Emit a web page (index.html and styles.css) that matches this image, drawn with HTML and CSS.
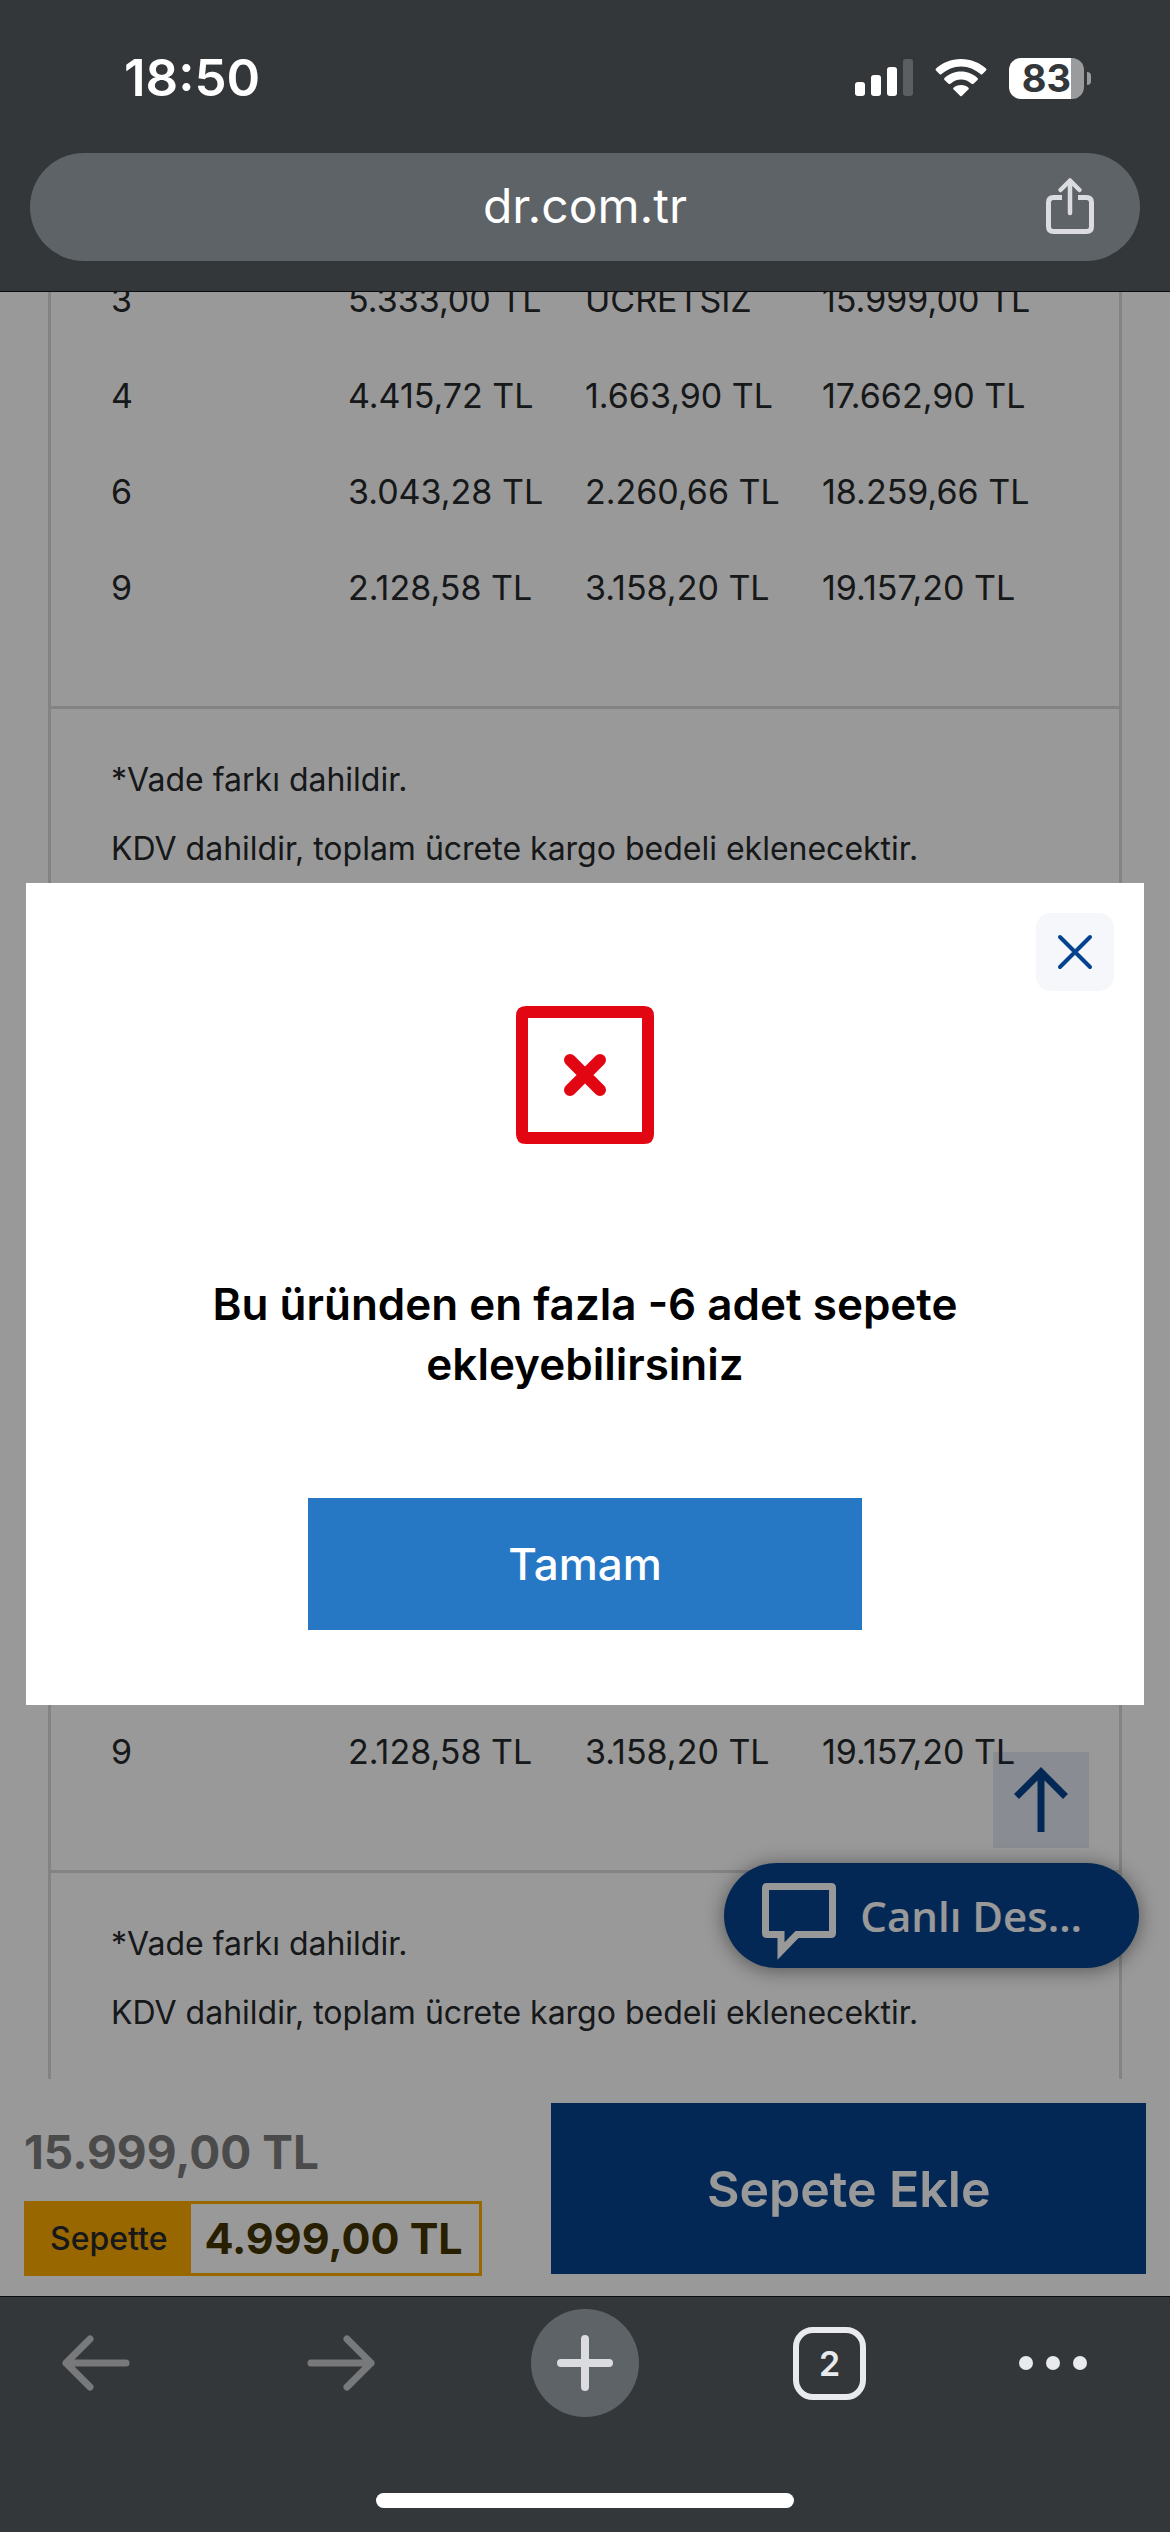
FILE: index.html
```html
<!DOCTYPE html>
<html lang="tr">
<head>
<meta charset="utf-8">
<meta name="viewport" content="width=device-width, initial-scale=1">
<title>dr.com.tr</title>
<link rel="stylesheet" href="styles.css">
</head>
<body>
<header class="browser-top">
  <div class="status">
    <span class="clock">18:50</span>
    <div class="status-icons">
      <svg class="signal" width="58" height="38" viewBox="0 0 58 38" aria-hidden="true">
        <g fill="#fff"><rect x="0" y="23" width="10" height="14" rx="3"/><rect x="16" y="16" width="10" height="21" rx="3"/><rect x="32" y="8" width="10" height="29" rx="3"/></g>
        <rect x="48" y="0" width="10" height="37" rx="3" fill="#5c5f61"/>
      </svg>
      <svg class="wifi" width="52" height="38" viewBox="0 0 52 38" fill="#fff" aria-hidden="true">
        <path d="M26 0C16 0 7 4 1 9.500Q0 10.500 1 11.500L4.500 15Q5.500 16 6.500 15C12 10.500 18.500 7.500 26 7.500S40 10.500 45.500 15Q46.500 16 47.500 15L51 11.500Q52 10.500 51 9.500C45 4 36 0 26 0Z"/>
        <path d="M26 12.500C19.500 12.500 14 15 9.500 19Q8.500 20 9.500 21L13.500 24.700Q14.500 25.500 15.500 24.700C18.500 22 22 20.500 26 20.500S33.500 22 36.500 24.700Q37.500 25.500 38.500 24.700L42.500 21Q43.500 20 42.500 19C38 15 32.500 12.500 26 12.500Z"/>
        <path d="M26 26C22.800 26 20.500 27 18.500 28.700Q17.700 29.500 18.500 30.300L25 36.800Q26 37.800 27 36.800L33.500 30.300Q34.300 29.500 33.500 28.700C31.500 27 29.200 26 26 26Z"/>
      </svg>
      <div class="battery">83</div>
    </div>
  </div>
  <div class="address">
    <span class="url">dr.com.tr</span>
    <button class="share" type="button" aria-label="Paylaş">
      <svg width="50" height="60" viewBox="0 0 50 60" fill="none" stroke="#dadce0" stroke-width="5" aria-hidden="true">
        <path d="M17 20.500H8.500Q3.500 20.500 3.500 25.500V49.500Q3.500 54.500 8.500 54.500H41.500Q46.500 54.500 46.500 49.500V25.500Q46.500 20.500 41.500 20.500H33"/>
        <path d="M25 36V4.500M15.500 13L25 3.500L34.500 13" stroke-width="4.500" stroke-linecap="round" stroke-linejoin="round"/>
      </svg>
    </button>
  </div>
</header>

<main class="shop">
  <div class="page">
    <section class="card">
      <table class="plans">
        <tbody>
          <tr><td>3</td><td>5.333,00 TL</td><td>ÜCRETSİZ</td><td>15.999,00 TL</td></tr>
          <tr><td>4</td><td>4.415,72 TL</td><td>1.663,90 TL</td><td>17.662,90 TL</td></tr>
          <tr><td>6</td><td>3.043,28 TL</td><td>2.260,66 TL</td><td>18.259,66 TL</td></tr>
          <tr><td>9</td><td>2.128,58 TL</td><td>3.158,20 TL</td><td>19.157,20 TL</td></tr>
        </tbody>
      </table>
      <div class="notes">
        <p>*Vade farkı dahildir.</p>
        <p>KDV dahildir, toplam ücrete kargo bedeli eklenecektir.</p>
      </div>
    </section>
    <section class="card card-last">
      <table class="plans">
        <tbody>
          <tr><td>9</td><td>2.128,58 TL</td><td>3.158,20 TL</td><td>19.157,20 TL</td></tr>
        </tbody>
      </table>
      <div class="notes">
        <p>*Vade farkı dahildir.</p>
        <p>KDV dahildir, toplam ücrete kargo bedeli eklenecektir.</p>
      </div>
    </section>
  </div>

  <div class="cart-bar">
    <div class="prices">
      <div class="old-price">15.999,00 TL</div>
      <div class="deal"><span class="deal-label">Sepette</span><strong class="deal-price">4.999,00 TL</strong></div>
    </div>
    <button class="add" type="button">Sepete Ekle</button>
  </div>

  <button class="to-top" type="button" aria-label="Yukarı çık">
    <svg width="56" height="66" viewBox="0 0 56 66" fill="none" stroke="#07448f" stroke-width="7" aria-hidden="true"><path d="M28 65V5M3.500 29.500L28 5L52.500 29.500"/></svg>
  </button>
  <button class="chat" type="button">
    <svg width="76" height="92" viewBox="0 -12 76 92" fill="none" stroke="#fff" stroke-width="7" aria-hidden="true"><path d="M6 4.500H70Q71.500 4.500 71.500 6V51Q71.500 52.500 70 52.500H36L20 69V52.500H6Q4.500 52.500 4.500 51V6Q4.500 4.500 6 4.500Z"/></svg>
    <span>Canlı Des…</span>
  </button>

  <div class="overlay">
    <section class="modal" role="dialog" aria-modal="true" aria-labelledby="message">
      <button class="close" type="button" aria-label="Kapat">
        <svg width="36" height="36" viewBox="0 0 36 36" fill="none" stroke="#06438f" stroke-width="4" stroke-linecap="round" aria-hidden="true"><path d="M3 3L33 33M33 3L3 33"/></svg>
      </button>
      <svg class="error" width="138" height="138" viewBox="0 0 138 138" aria-hidden="true">
        <path fill="#e20613" fill-rule="evenodd" d="M10 0H128Q138 0 138 10V128Q138 138 128 138H10Q0 138 0 128V10Q0 0 10 0ZM12 12V126H126V12Z"/>
        <path d="M54 54L84 84M84 54L54 84" stroke="#e20613" stroke-width="12" stroke-linecap="round"/>
      </svg>
      <p class="message" id="message">Bu üründen en fazla -6 adet sepete ekleyebilirsiniz</p>
      <button class="ok" type="button">Tamam</button>
    </section>
  </div>
</main>

<nav class="browser-bottom">
  <div class="tools">
    <button type="button" aria-label="Geri"><svg width="68" height="56" viewBox="0 0 68 56" fill="none" stroke="#77797b" stroke-width="7" stroke-linecap="round" stroke-linejoin="round" aria-hidden="true"><path d="M64 28H4M28 4L4 28L28 52"/></svg></button>
    <button type="button" aria-label="İleri"><svg width="68" height="56" viewBox="0 0 68 56" fill="none" stroke="#77797b" stroke-width="7" stroke-linecap="round" stroke-linejoin="round" aria-hidden="true"><path d="M4 28H64M40 4L64 28L40 52"/></svg></button>
    <button class="new-tab" type="button" aria-label="Yeni sekme"><svg width="56" height="56" viewBox="0 0 56 56" stroke="#dadce0" stroke-width="8" stroke-linecap="round" aria-hidden="true"><path d="M28 4V52M4 28H52"/></svg></button>
    <button class="tabs" type="button" aria-label="2 sekme">2</button>
    <button class="more" type="button" aria-label="Menü"><svg width="68" height="14" viewBox="0 0 68 14" fill="#e8eaed" aria-hidden="true"><circle cx="7" cy="7" r="7"/><circle cx="34" cy="7" r="7"/><circle cx="61" cy="7" r="7"/></svg></button>
  </div>
  <div class="home-bar"></div>
</nav>
</body>
</html>
```
FILE: styles.css
```css
* { box-sizing: border-box; }

body {
  margin: 0;
  min-height: 100vh;
  display: flex;
  flex-direction: column;
  background: #33373a;
  font-family: Inter, "Liberation Sans", sans-serif;
  color: #26292b;
}

button {
  margin: 0;
  padding: 0;
  border: 0;
  background: none;
  font-family: inherit;
  color: inherit;
}

svg { display: block; flex: none; }
p { margin: 0; }

/* Browser top */
.browser-top {
  padding: 47px 30px 30px;
  border-bottom: 1px solid #0c0d0e;
}

.status {
  display: flex;
  justify-content: space-between;
  align-items: center;
  height: 62px;
  margin-bottom: 44px;
  padding: 0 56px 0 94px;
  color: #fff;
}

.clock { font-size: 51px; line-height: 62px; font-weight: 600; }

.status-icons { display: flex; align-items: center; gap: 22px; }

.battery {
  position: relative;
  width: 75px;
  height: 41px;
  border-radius: 12px;
  background: linear-gradient(to right, #fff 62px, #9a9b9d 62px);
  color: #33373a;
  font-size: 38px;
  line-height: 41px;
  font-weight: 700;
  text-align: center;
}

.battery::after {
  content: "";
  position: absolute;
  left: 78px;
  top: 14px;
  width: 4px;
  height: 13px;
  border-radius: 0 6px 6px 0;
  background: #9a9b9d;
}

.address {
  display: grid;
  grid-template-columns: 1fr auto 1fr;
  align-items: center;
  height: 108px;
  padding: 0 45px;
  border-radius: 54px;
  background: #5e6367;
}

.url { grid-column: 2; padding-bottom: 2px; color: #fff; font-size: 48px; line-height: 60px; }
.share { justify-self: end; }

/* Shop page */
.shop {
  position: relative;
  flex: 1;
  display: flex;
  flex-direction: column;
  overflow: hidden;
  background: #fff;
}

.page {
  flex: 1;
  display: flex;
  flex-direction: column;
  gap: 36px;
  margin-top: -40px;
  padding: 0 48px;
}

.card { border: 3px solid #dadada; border-width: 0 3px; }

.card-last {
  flex: 1;
  display: flex;
  flex-direction: column;
  justify-content: flex-end;
}

.plans {
  table-layout: fixed;
  width: calc(100% - 120px);
  margin: 0 60px 70px;
  border-collapse: collapse;
  font-size: 34px;
  line-height: 40px;
}

.plans td { height: 96px; padding: 0; white-space: nowrap; }

.notes {
  padding: 36px 60px 32px;
  border-top: 3px solid #dadada;
  font-size: 32px;
  line-height: 69px;
}

.cart-bar {
  display: flex;
  justify-content: space-between;
  align-items: flex-start;
  gap: 24px;
  padding: 24px 24px 20px;
}

.prices { padding-top: 20px; }

.old-price {
  margin-bottom: 20px;
  color: #7d7d7d;
  font-size: 46px;
  line-height: 58px;
  font-weight: 700;
}

.deal { display: flex; height: 75px; border: 3px solid #feac00; }

.deal-label {
  padding: 0 24px 0 23px;
  background: #feac00;
  font-size: 32px;
  line-height: 69px;
  font-weight: 500;
}

.deal-price {
  padding: 0 16px 0 13px;
  color: #433500;
  font-size: 43px;
  line-height: 69px;
  font-weight: 700;
}

.add {
  width: 53%;
  height: 171px;
  background: #07448f;
  color: #fff;
  font-size: 50px;
  font-weight: 600;
}

.to-top {
  position: absolute;
  right: 81px;
  bottom: 448px;
  width: 96px;
  height: 96px;
  display: grid;
  place-items: center;
  background: rgba(7, 68, 143, .11);
}

.chat {
  position: absolute;
  right: 31px;
  bottom: 328px;
  height: 105px;
  display: flex;
  align-items: center;
  gap: 23px;
  padding: 0 57px 0 37px;
  border-radius: 53px;
  background: #07448f;
  box-shadow: 0 2px 20px rgba(0, 0, 0, .45);
  color: #fff;
  font-family: "Open Sans", "Noto Sans", sans-serif;
  font-size: 42px;
  font-weight: 600;
}

/* Dialog */
.overlay {
  position: absolute;
  inset: 0;
  display: flex;
  align-items: center;
  padding: 0 26px;
  background: rgba(0, 0, 0, .4);
}

.modal {
  position: relative;
  flex: 1;
  display: flex;
  flex-direction: column;
  align-items: center;
  padding: 123px 160px 75px;
  background: #fff;
}

.close {
  position: absolute;
  top: 30px;
  right: 30px;
  width: 78px;
  height: 78px;
  display: grid;
  place-items: center;
  border-radius: 15px;
  background: #f5f7fb;
}

.message {
  margin: 130px 0 104px;
  color: #000;
  font-size: 44px;
  line-height: 60px;
  font-weight: 600;
  text-align: center;
}

.ok {
  width: 554px;
  height: 132px;
  background: #2677c4;
  color: #fff;
  font-size: 44px;
  font-weight: 500;
}

/* Browser bottom */
.browser-bottom {
  padding: 12px 0 24px;
  border-top: 1px solid #0c0d0e;
}

.tools {
  display: grid;
  grid-template-columns: 191fr 299fr 190fr 299fr 191fr;
  place-items: center;
  height: 108px;
  margin-bottom: 76px;
}

.new-tab {
  width: 108px;
  height: 108px;
  display: grid;
  place-items: center;
  border-radius: 50%;
  background: #5e6367;
}

.tabs {
  width: 73px;
  height: 73px;
  border: 6px solid #e8eaed;
  border-radius: 20px;
  color: #e8eaed;
  font-size: 34px;
  font-weight: 600;
}

.more { padding-right: 44px; }

.home-bar {
  width: 418px;
  height: 15px;
  margin: 0 auto;
  border-radius: 8px;
  background: #fff;
}
```
